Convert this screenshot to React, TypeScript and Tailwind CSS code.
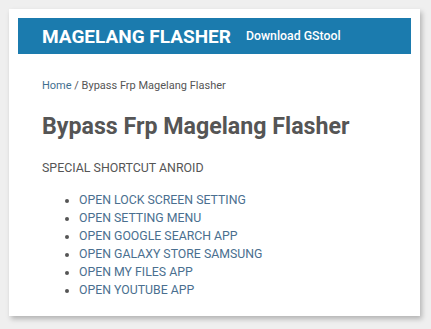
import React from 'react'

const shortcuts = [
  'OPEN LOCK SCREEN SETTING',
  'OPEN SETTING MENU',
  'OPEN GOOGLE SEARCH APP',
  'OPEN GALAXY STORE SAMSUNG',
  'OPEN MY FILES APP',
  'OPEN YOUTUBE APP',
]

export default function App() {
  return (
    <div className="w-[431px] h-[329px] bg-[#efefef] p-[9px] font-['Roboto',sans-serif]">
      <div className="w-[411px] h-[307px] bg-white shadow-[2px_3px_5px_rgba(0,0,0,0.25)] pt-[9px] px-[9px]">
        {/* top bar */}
        <div className="h-[36px] bg-[#1b7bae] flex items-center pl-[24px] gap-[15px]">
          <span className="text-white font-bold text-[19px] leading-none">MAGELANG FLASHER</span>
          <span className="text-white font-medium text-[12.3px] leading-none">Download GStool</span>
        </div>

        <div className="pl-[24px]">
          <div className="mt-[25px] text-[11px] leading-[14px] text-[#555]">
            <span className="text-[#3f6f90]">Home</span> / Bypass Frp Magelang Flasher
          </div>

          <h1 className="mt-[18px] text-[23.2px] leading-[30px] font-bold text-[#555]">
            Bypass Frp Magelang Flasher
          </h1>

          <p className="mt-[19px] text-[12.4px] leading-[16px] text-[#555]">SPECIAL SHORTCUT ANROID</p>

          <ul className="mt-[15px] pl-[37px] list-disc marker:text-[#555]">
            {shortcuts.map((s) => (
              <li key={s} className="text-[12.3px] leading-[18px] text-[#4a6f8f]">
                {s}
              </li>
            ))}
          </ul>
        </div>
      </div>
    </div>
  )
}
